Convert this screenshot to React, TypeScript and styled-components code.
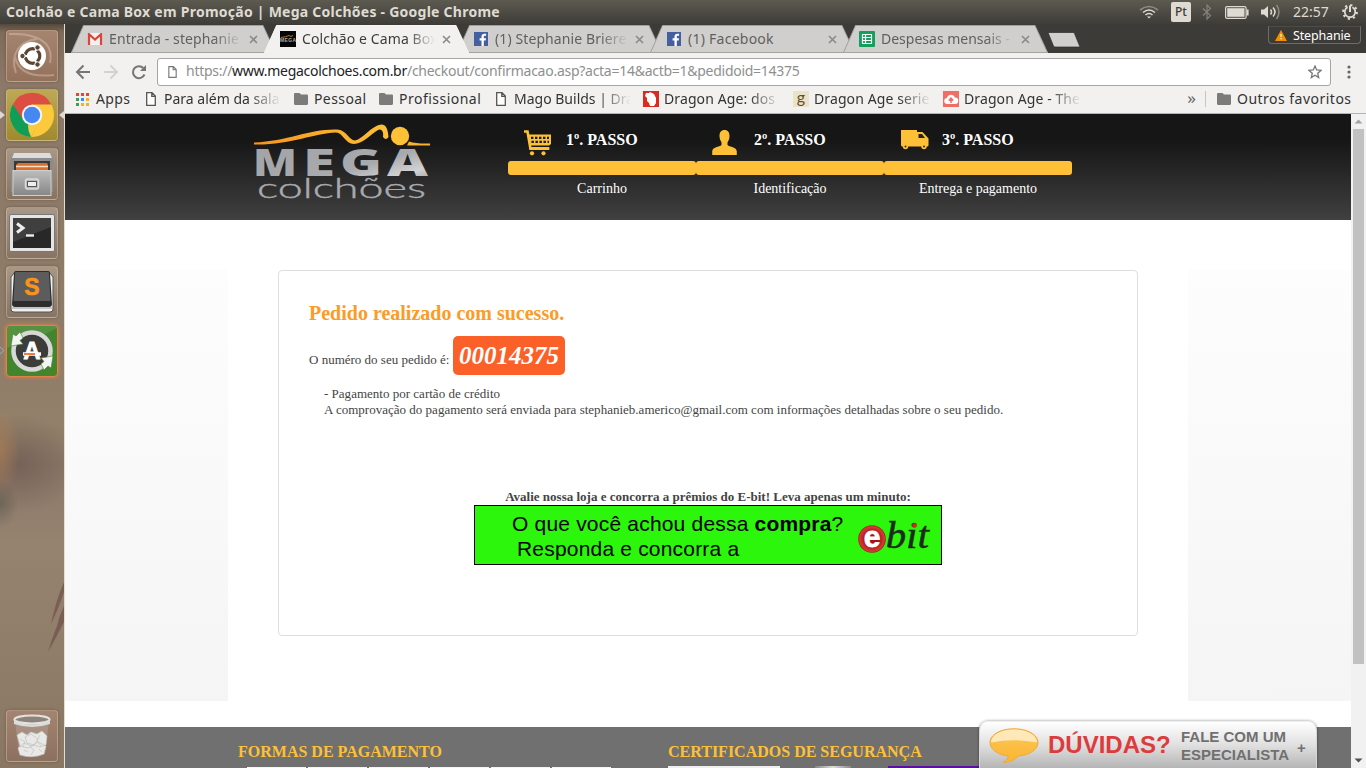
import React from "react";
import styled, { createGlobalStyle, css } from "styled-components";

const ui = `"Noto Sans", "Open Sans", sans-serif`;
const serif = `"Liberation Serif", "Times New Roman", serif`;
const sans = `"Liberation Sans", Arial, sans-serif`;

const GlobalStyle = createGlobalStyle`
  * { box-sizing: border-box; }
  body { margin: 0; overflow: hidden; font-family: ${ui}; }
  svg { display: block; flex: none; }
`;

const Desktop = styled.div`
  width: 1366px;
  height: 768px;
  display: grid;
  grid-template: 24px 744px / 65px 1301px;
  overflow: hidden;
`;

/* ---------- system bar ---------- */
const SystemBar = styled.header`
  grid-column: 1 / 3;
  display: flex;
  align-items: center;
  justify-content: space-between;
  padding: 0 8px 0 6px;
  background: linear-gradient(#5d5b50, #4d4b44 50%, #3e3d38);
  color: #dfdbd2;
`;
const WindowTitle = styled.div`
  font: bold 14px/24px ${ui};
  letter-spacing: 0.25px;
  white-space: nowrap;
`;
const Indicators = styled.div`
  display: flex;
  align-items: center;
`;
const Indicator = styled.div<{ $gap: number }>`
  margin-left: ${(p) => p.$gap}px;
`;
const Keyboard = styled.div`
  width: 20px;
  height: 20px;
  margin-left: 12px;
  border-radius: 2px;
  background: #dfdbd2;
  color: #3c3b37;
  font: 500 12px/20px ${ui};
  text-align: center;
`;
const Clock = styled.div`
  width: 37px;
  margin: 0 12px 0 12px;
  font: 14px/24px ${ui};
  white-space: nowrap;
`;

/* ---------- launcher ---------- */
const Launcher = styled.nav`
  position: relative;
  display: flex;
  flex-direction: column;
  gap: 7px;
  padding: 6px 6px;
  border-right: 1px solid #e6ddcf;
  background:
    radial-gradient(ellipse 20px 44px at 0 425px, rgba(172, 126, 82, 0.7), transparent),
    radial-gradient(ellipse 60px 50px at 18px 440px, rgba(96, 76, 70, 0.5), transparent),
    radial-gradient(ellipse 18px 24px at 0 480px, rgba(84, 84, 76, 0.55), transparent),
    linear-gradient(#55473a 0, #7e6b5a 8px, #8d7967 60px, #8e7b68 300px, #92806a 400px, #8c7868 440px, #958370 520px, #8a7763 100%);
`;
const Tile = styled.div<{ $bg?: string; $glow?: boolean }>`
  width: 52px;
  height: 52px;
  flex: none;
  display: grid;
  place-items: center;
  border: 1px solid rgba(225, 205, 185, 0.4);
  border-radius: 4px;
  background: ${(p) => p.$bg || "linear-gradient(rgba(255,245,235,.24), rgba(255,240,225,.1) 50%, rgba(60,40,30,.08))"};
  box-shadow: 0 0 3px rgba(50, 35, 25, 0.35);
  ${(p) => p.$glow && css`
    border-color: #e0824c;
    box-shadow: 0 0 3px 1px #d87b48;
  `}
`;
const Spring = styled.div`
  flex: 1;
`;
const Marks = styled.svg`
  position: absolute;
  left: 0;
  top: 0;
`;

/* ---------- browser chrome ---------- */
const Browser = styled.div`
  display: grid;
  grid-template-rows: 29px 61px 654px;
  min-width: 0;
`;
const TabStrip = styled.div`
  display: flex;
  align-items: flex-start;
  padding: 1px 5px 0 6px;
  background: #3c3b37;
`;
const TabBox = styled.div<{ $active?: boolean }>`
  position: relative;
  z-index: ${(p) => (p.$active ? 2 : 1)};
  display: flex;
  align-items: center;
  flex: none;
  width: 205px;
  height: 28px;
  margin-right: -12px;
  padding-left: 16px;
  color: ${(p) => (p.$active ? "#3c3c3c" : "#5f5f5f")};
`;
const TabShape = styled.svg`
  position: absolute;
  inset: 0;
  z-index: -1;
`;
const TabIcon = styled.div`
  width: 16px;
  height: 16px;
  margin-right: 6px;
  display: grid;
  place-items: center;
`;
const TabTitle = styled.div<{ $fade?: boolean; $ls?: number }>`
  width: 133px;
  overflow: hidden;
  white-space: nowrap;
  font: 14px/20px ${ui};
  letter-spacing: ${(p) => p.$ls ?? 0}px;
  ${(p) => p.$fade && css`mask-image: linear-gradient(90deg, #000 105px, transparent 133px);`}
`;
const TabClose = styled.div`
  margin-left: 7px;
`;
const NewTab = styled.svg`
  margin: 7px 0 0 11px;
`;
const Profile = styled.div`
  display: flex;
  align-items: center;
  gap: 6px;
  width: 93px;
  height: 18px;
  margin: 1px 0 0 auto;
  padding-left: 6px;
  border: 1px solid #6e6d69;
  border-top-color: #4d4c48;
  border-radius: 0 0 4px 4px;
  color: #fff;
  font: 12.5px/17px ${ui};
  letter-spacing: -0.15px;
`;
const Controls = styled.div`
  display: grid;
  grid-template-rows: 33px 27px;
  background: #f2f1f0;
  border-bottom: 1px solid #b6b4b2;
`;
const Toolbar = styled.div`
  display: flex;
  align-items: center;
  padding: 4px 0 0 10px;
`;
const NavIcon = styled.div`
  width: 28px;
`;
const Omnibox = styled.div`
  display: flex;
  align-items: center;
  width: 1174px;
  height: 28px;
  margin-left: -2px;
  padding: 0 8px 0 10px;
  background: #fff;
  border: 1px solid #a6a5a4;
  border-radius: 3px;
`;
const Url = styled.div`
  flex: 1;
  margin-left: 9px;
  padding-bottom: 2px;
  color: #8f8f8f;
  font: 14px/22px ${ui};
  letter-spacing: -0.27px;
  white-space: nowrap;
  b { font-weight: 400; color: #222; }
`;
const MenuDots = styled.svg`
  margin-left: 16px;
`;
const Bookmarks = styled.div`
  display: flex;
  align-items: center;
  padding: 0 0 1px 11px;
`;
const Bookmark = styled.div<{ $w: number; $icon?: number }>`
  display: flex;
  align-items: center;
  flex: none;
  width: ${(p) => p.$w}px;
  > svg { margin-right: ${(p) => p.$icon ?? 6}px; }
`;
const BookmarkText = styled.div<{ $fade?: boolean; $ls?: number }>`
  padding-bottom: 1px;
  color: #333;
  font: 14px/22px ${ui};
  letter-spacing: ${(p) => p.$ls ?? 0}px;
  white-space: nowrap;
  ${(p) => p.$fade && css`
    width: 117px;
    overflow: hidden;
    mask-image: linear-gradient(90deg, #000 85px, transparent 117px);
  `}
`;
const More = styled.div`
  margin-left: auto;
  padding-bottom: 2px;
  color: #666;
  font: 17px/20px ${ui};
`;
const Divider = styled.div`
  width: 1px;
  height: 16px;
  margin: 0 11px 0 9px;
  background: #c6c5c4;
`;

/* ---------- page ---------- */
const Viewport = styled.div`
  position: relative;
  display: grid;
  grid-template-columns: 1286px 15px;
  overflow: hidden;
  background: #fff;
`;
const Page = styled.div`
  display: grid;
  grid-template-rows: 106px 507px 41px;
  font-family: ${serif};
`;
const SiteHeader = styled.div`
  display: flex;
  padding-left: 188px;
  background: linear-gradient(#161616 25%, #404040);
`;
const Logo = styled.svg`
  width: 180px;
  height: 90px;
  margin: 6px 75px 0 0;
`;
const Step = styled.div`
  width: 188px;
  padding-top: 16px;
  color: #fff;
`;
const StepHead = styled.div<{ $left: number }>`
  display: flex;
  height: 31px;
  padding-left: ${(p) => p.$left}px;
  font: bold 16px/20px ${serif};
  > svg { margin-right: ${(p) => 30 - p.$left}px; }
`;
const StepBar = styled.div`
  height: 14px;
  border-radius: 3px;
  background: #fdc037;
`;
const StepName = styled.div`
  margin-top: 6px;
  font: 14px/16px ${serif};
  text-align: center;
`;
const Body = styled.main`
  display: grid;
  grid-template-columns: 163px 860px 163px;
  justify-content: space-between;
  height: 481px;
`;
const Side = styled.div`
  margin-top: 50px;
  background: linear-gradient(#fdfdfd, #f5f5f5);
`;
const Card = styled.section`
  height: 366px;
  margin-top: 50px;
  padding: 29px 30px;
  border: 1px solid #dedede;
  border-radius: 4px;
  color: #444;
  font: 13px/16px ${serif};
`;
const Title = styled.h1`
  margin: 0;
  color: #fd9b27;
  font: bold 20px/26px ${serif};
`;
const OrderLine = styled.div`
  display: flex;
  align-items: baseline;
  gap: 4px;
  margin-top: 10px;
`;
const OrderNumber = styled.em`
  padding: 5px 6.500px 5px 5.500px;
  border-radius: 5px;
  background: #fc6029;
  color: #fff;
  font: italic bold 25px/29px ${serif};
`;
const Details = styled.p`
  margin: 11px 0 0 15px;
  letter-spacing: 0.01px;
  white-space: nowrap;
`;
const Survey = styled.div`
  display: flex;
  flex-direction: column;
  align-items: center;
  margin-top: 71px;
  font-weight: bold;
`;
const Banner = styled.div`
  display: flex;
  width: 468px;
  height: 60px;
  padding: 5px 0 0 37px;
  border: 1px solid #000;
  background: #2bf60c;
  color: #000;
  font: 21px/25px ${sans};
  letter-spacing: 0.19px;
`;
const Question = styled.div`
  width: 345px;
  white-space: nowrap;
`;
const SecondLine = styled.div`
  padding-left: 5px;
`;
const Footer = styled.footer`
  display: grid;
  grid-template-columns: 430px 1fr;
  padding: 15px 0 0 173px;
  background: #707070;
  overflow: hidden;
`;
const FooterTitle = styled.h2`
  margin: 0;
  color: #fdc037;
  font: bold 16px/20px ${serif};
`;
const PaymentRow = styled.div`
  display: flex;
  gap: 2px;
  margin: 5px 0 0 9px;
`;
const Payment = styled.div`
  width: 59px;
  height: 30px;
  background: #f4f4f4;
`;
const SealRow = styled.div`
  display: flex;
  margin-top: 4px;
`;
const Seal = styled.div<{ $w: number; $left: number; $color: string }>`
  width: ${(p) => p.$w}px;
  height: 30px;
  margin-left: ${(p) => p.$left}px;
  background: ${(p) => p.$color};
`;
const Chat = styled.aside`
  position: absolute;
  right: 49px;
  bottom: 0;
  display: flex;
  width: 338px;
  height: 47px;
  padding: 6px 0 0 9px;
  border: 1px solid #d8d8d8;
  border-top-color: #eee;
  border-bottom: 0;
  border-radius: 9px 9px 0 0;
  background: linear-gradient(#fff, #e0e0e0 50%, #b5b5b5);
  box-shadow: 0 0 3px rgba(0, 0, 0, 0.45);
  font-family: ${sans};
  font-weight: bold;
`;
const Doubts = styled.div`
  width: 133px;
  margin-left: 9px;
  color: #dc3c3e;
  font-size: 24px;
  line-height: 34px;
`;
const Talk = styled.div`
  width: 116px;
  color: #707070;
  font-size: 15px;
  line-height: 18px;
  white-space: nowrap;
`;
const Plus = styled.div`
  color: #707070;
  font-size: 15px;
  line-height: 40px;
`;
const ScrollBar = styled.div`
  display: flex;
  flex-direction: column;
  align-items: center;
  justify-content: space-between;
  background: #f1f1f1;
`;
const Thumb = styled.div`
  width: 11px;
  height: 535px;
  margin-bottom: 89px;
  background: #c1c1c1;
`;

/* ---------- drawings ---------- */
const FolderIcon = () => (
  <svg width="14" height="12" viewBox="0 0 14 12">
    <path d="M1.2 0H5.5L7 1.600h5.800c.7 0 1.200.5 1.200 1.200v8c0 .7-.5 1.200-1.200 1.200H1.200C.5 12 0 11.500 0 10.800V1.200C0 .5.500 0 1.200 0z" fill="#7b7b7b" />
  </svg>
);
const PageIcon = ({ w = 10, h = 14, color = "#555" }) => (
  <svg width={w} height={h} viewBox="0 0 10 14">
    <path d="M.7.7H6l3.300 3.400v9.200H.7zM5.800.7v3.600h3.500" fill="#fff" stroke={color} strokeWidth="1.300" />
  </svg>
);
const FacebookIcon = () => (
  <svg width="14" height="14" viewBox="0 0 14 14">
    <rect width="14" height="14" fill="#4460a0" />
    <path d="M7.500 14V8.400H5.600V6.300h1.900V4.700c0-2 1.100-3 2.900-3h1.700v2.100h-1.200c-.9 0-1.100.4-1.100 1.100v1.400h2.200l-.3 2.100H9.800V14z" fill="#fff" />
  </svg>
);
const GmailIcon = () => (
  <svg width="16" height="12" viewBox="0 0 16 12">
    <rect x="1" y="0" width="14" height="12" rx="1" fill="#f3f1f0" />
    <path d="M2 12V1.200L8 6.600l6-5.400V12" fill="none" stroke="#d9453a" strokeWidth="2.200" />
  </svg>
);
const MegaIcon = () => (
  <svg width="16" height="16" viewBox="0 0 16 16">
    <rect width="16" height="16" fill="#050505" />
    <path d="M1 6.500Q6 6 9 4.500l2 1 2-1" fill="none" stroke="#b87a1c" />
    <text x="0" y="10.500" fontSize="5" fontWeight="bold" fontFamily="Liberation Sans" fill="#aaa" textLength="16">MEGA</text>
  </svg>
);
const SheetIcon = () => (
  <svg width="16" height="16" viewBox="0 0 16 16">
    <rect width="16" height="16" rx="1" fill="#12a05c" />
    <path d="M3.500 3.500h9v9h-9zM3.500 6.500h9M3.500 9.500h9M6.500 3.500v9" fill="none" stroke="#fff" strokeWidth="1.200" />
  </svg>
);
const CloseIcon = () => (
  <svg width="9" height="9" viewBox="0 0 9 9">
    <path d="M1 1l7 7M8 1L1 8" stroke="#8a8a8a" strokeWidth="1.600" />
  </svg>
);

type TabProps = { icon: React.ReactNode; title: string; active?: boolean; fade?: boolean; ls?: number };
const Tab = ({ icon, title, active, fade = true, ls }: TabProps) => (
  <TabBox $active={active}>
    <TabShape width="205" height="28" viewBox="0 0 205 28">
      <path d="M0 28L12.500 0H192L205 28z" fill={active ? "#f2f1f0" : "#d1cfcd"} />
      <path d="M.5 27.500L12.500.5H192L204.500 27.500" fill="none" stroke={active ? "#f8f8f7" : "#96948f"} strokeWidth=".8" />
      {!active && <path d="M0 27.500h205" stroke="#a5a3a0" />}
    </TabShape>
    <TabIcon>{icon}</TabIcon>
    <TabTitle $fade={fade} $ls={ls}>{title}</TabTitle>
    <TabClose><CloseIcon /></TabClose>
  </TabBox>
);

const UbuntuIcon = () => (
  <svg width="50" height="50" viewBox="0 0 50 50">
    <g fill="none" stroke="#e4d0c0" strokeWidth="2" opacity=".4">
      <path d="M2 3C24 2 48 8 43 32M9 42C2 22 14 10 30 8M47 44C30 46 12 44 8 26" />
    </g>
    <circle cx="25" cy="25" r="14" fill="#fff" />
    <circle cx="25.500" cy="25" r="7.300" fill="none" stroke="#5b4533" strokeWidth="3.200" />
    <path d="M25.500 25L12 25M25.500 25l6.500-11.500M25.500 25L32 36.500" stroke="#fff" strokeWidth="2" />
    <circle cx="25.500" cy="25" r="5" fill="#fff" />
    <g fill="#5b4533" stroke="#fff">
      <circle cx="15.500" cy="25" r="2.700" /><circle cx="30.500" cy="16.500" r="2.700" /><circle cx="30.500" cy="33.500" r="2.700" />
    </g>
  </svg>
);
const ChromeIcon = () => (
  <svg width="46" height="46" viewBox="0 0 46 46">
    <circle cx="23" cy="23" r="22" fill="#fdc93c" />
    <path d="M3.900 12A22 22 0 0022 45l9-17L16 27z" fill="#109d58" />
    <path d="M23 12.500h19.500A22 22 0 0022 45l10-17z" fill="#fdc93c" />
    <path d="M3.900 12A22 22 0 0142.500 12.500H23L13 26z" fill="#dc4e41" />
    <circle cx="23" cy="23" r="10.200" fill="#f4f4f4" /><circle cx="23" cy="23" r="8.200" fill="#4688f1" />
  </svg>
);
const FilesIcon = () => (
  <svg width="44" height="46" viewBox="0 0 44 46">
    <defs><linearGradient id="cab" x2="0" y2="1"><stop stopColor="#bdbdbd" /><stop offset="1" stopColor="#868686" /></linearGradient></defs>
    <path d="M3 3h38l2 6v32H1V9z" fill="#8c8c8c" />
    <path d="M4 2h36l2 5H2z" fill="#dcdcdc" />
    <rect x="4" y="10" width="36" height="10" fill="#3b3937" />
    <path d="M6 20v-6l2-2h29l1 2v6z" fill="#d86f2e" /><path d="M6 15.500h32" stroke="#ffe0be" strokeWidth="1.500" />
    <rect x="3" y="19.500" width="38" height="25" fill="url(#cab)" stroke="#cfcfcf" />
    <rect x="15.500" y="28" width="13" height="10" rx="2" fill="#b9b9b9" stroke="#dadada" strokeWidth="1.500" />
    <rect x="17.500" y="30.500" width="9" height="5" fill="#eee" stroke="#555" />
  </svg>
);
const TerminalIcon = () => (
  <svg width="46" height="38" viewBox="0 0 46 38">
    <rect x=".5" y=".5" width="45" height="37" rx="1.500" fill="#e5e5e5" stroke="#777" />
    <rect x="4" y="4" width="38" height="30" fill="#282828" />
    <path d="M4 4h38v9L4 28z" fill="#3f3f3f" />
    <path d="M8 9.500l6 4.500-6 4.500" fill="none" stroke="#eee" strokeWidth="3" /><path d="M17 21.500h8" stroke="#eee" strokeWidth="2.400" />
  </svg>
);
const SublimeIcon = () => (
  <svg width="44" height="42" viewBox="0 0 44 42">
    <path d="M1 6l3-4h36l3 4v32q0 3-3 3H4q-3 0-3-3z" fill="#f0f0f0" stroke="#555" />
    <path d="M2 37h40" stroke="#999" />
    <path d="M4 2q0-2 2-2h32q2 0 2 2l2 31q0 3-3 3H5q-3 0-3-3z" fill="#2d2d2d" />
    <path d="M5 2q0-1 1-1h32q1 0 1 1l1.500 28H3.500z" fill="#5c5c5c" />
    <text x="22" y="23.500" textAnchor="middle" fontFamily="Liberation Sans" fontWeight="bold" fontSize="23" fill="#f79420" stroke="#f79420" strokeWidth=".6">S</text>
  </svg>
);
const UpdaterIcon = () => (
  <svg width="50" height="50" viewBox="0 0 50 50">
    <path d="M0 22Q24 16 50 2V0H0z" fill="#6fa35c" opacity=".4" />
    <circle cx="25" cy="25" r="18.500" fill="#3c3c3a" stroke="#d8d8d6" strokeWidth="4.500" />
    <path d="M4 20L6 8l3 2 4-4 3 6-3 2.500 3 3.500zM46 30l-2 12-3-2-4 4-3-6 3-2.500-3-3.500z" fill="#f4f4f4" stroke="#43852f" strokeWidth=".6" />
    <text x="25" y="33" textAnchor="middle" fontFamily="Liberation Sans" fontWeight="bold" fontSize="24" fill="#fff" stroke="#fff" strokeWidth=".8">A</text>
    <path d="M16 28h18" stroke="#fff" strokeWidth="3.500" /><path d="M17 28h11" stroke="#f06d2b" strokeWidth="1.800" />
  </svg>
);
const TrashIcon = () => (
  <svg width="40" height="46" viewBox="0 0 40 46">
    <path d="M3 8l4 33q13 6 26 0l4-33z" fill="#c0b8b0" opacity=".35" />
    <g fill="#e8e8e7" stroke="#c2c2c0" strokeWidth=".7">
      <path d="M5 22l5-3 5 3 4-3 6 2 5-3 5 5-1 9-6 2-6-2-6 3-8-2zM6 35l6-5 8 3 6-4 8 4-2 8q-12 5-24 1zM13 24l6-3 7 5-4 6-7-2z" />
      <path d="M8 26l5 3-2 5M28 22l-3 6 4 5M18 34l4 3-3 5M12 37l4 2M27 36l3 3" fill="none" />
    </g>
    <ellipse cx="20" cy="6.500" rx="17.500" ry="4" fill="#8d837a" stroke="#e2e2e0" strokeWidth="2.200" />
    <path d="M2 8q18 7 36 0v3q-18 6-36 0z" fill="#dbdcda" />
  </svg>
);

const SiteLogo = () => (
  <Logo viewBox="0 0 180 90">
    <defs>
      <linearGradient id="metal" x2="1" y2="1"><stop stopColor="#a1a2a5" /><stop offset=".6" stopColor="#a9aaad" /><stop offset=".8" stopColor="#d2d2d4" /><stop offset="1" stopColor="#8c8d90" /></linearGradient>
      <linearGradient id="gold"><stop stopColor="#f7941e" /><stop offset="1" stopColor="#fdc037" /></linearGradient>
    </defs>
    <path d="M1 22.500C35 21 58 8.500 84 9.500C94 10 96 20.500 102 20.500C110 19 118 6 128 4.500C134 4.500 135 11 135.500 17Q133 21 130 17C131 11 128 8 125 10C117 15 109 24 101 24C92 24 90 12.500 83 12.500C60 13.500 35 25.500 1 24.500z" fill="url(#gold)" />
    <circle cx="147" cy="16" r="9.200" fill="#fdc037" />
    <path d="M156 21.500Q164 24 177 23.500v2h-23z" fill="#fbb030" />
    <text x="0" y="56" fontFamily="Open Sans, sans-serif" fontWeight="800" fontSize="36.500" fill="url(#metal)">
      <tspan x="0" textLength="44" lengthAdjust="spacingAndGlyphs">M</tspan>
      <tspan x="50" textLength="32" lengthAdjust="spacingAndGlyphs">E</tspan>
      <tspan x="87" textLength="42" lengthAdjust="spacingAndGlyphs">G</tspan>
      <tspan x="134" textLength="41" lengthAdjust="spacingAndGlyphs">A</tspan>
    </text>
    <text x="4" y="77.500" fontFamily="Lato, sans-serif" fontWeight="300" fontSize="26.500" fill="#a9aaad" stroke="#a9aaad" strokeWidth=".35" textLength="169" lengthAdjust="spacingAndGlyphs">colchões</text>
  </Logo>
);
const CartIcon = () => (
  <svg width="28" height="26" viewBox="0 0 28 26">
    <path d="M0 1.500h3.500L6.500 19" fill="none" stroke="#fdc037" strokeWidth="2.600" />
    <rect x="5" y="17" width="20.500" height="3" rx="1" fill="#fdc037" />
    <path d="M4.500 4.500H27v9.500L25 15.500H7z" fill="#fdc037" />
    <path d="M7 7.800H25M7.500 11.800H25" stroke="#1b1b1b" strokeWidth="2.200" strokeDasharray="2.400 1.600" />
    <circle cx="8" cy="23.300" r="2.100" fill="#fdc037" /><circle cx="19.500" cy="23.300" r="2.100" fill="#fdc037" />
  </svg>
);
const PersonIcon = () => (
  <svg width="28" height="26" viewBox="0 0 28 26">
    <path d="M12.500 0c3.500 0 5 2.500 5 6 0 3-1 4.500-2 6.500v2.500c2 2 9.300 2 9.300 6.500V25H.2v-3.500C.2 17 7.500 17 9.500 15v-2.500c-1-2-2-3.500-2-6.500 0-3.500 1.500-6 5-6z" fill="#fdc037" />
  </svg>
);
const TruckIcon = () => (
  <svg width="28" height="20" viewBox="0 0 28 20">
    <path d="M0 0h16v2h5.500l6 6.500V15q0 1.500-1.500 1.500H1.500Q0 16.500 0 15z" fill="#fdc037" />
    <path d="M17.500 4h3.500l3 4h-6.500z" fill="#242424" />
    <g fill="#fdc037"><circle cx="4.500" cy="16.500" r="2.700" /><circle cx="23" cy="16.500" r="2.700" /></g>
    <g fill="#222"><circle cx="4.500" cy="16.500" r=".9" /><circle cx="23" cy="16.500" r=".9" /></g>
  </svg>
);
const EbitLogo = () => (
  <svg width="80" height="50" viewBox="0 0 80 50">
    <defs><radialGradient id="ball"><stop offset=".5" stopColor="#a81216" /><stop offset=".9" stopColor="#d63a36" /><stop offset="1" stopColor="#a3171a" /></radialGradient></defs>
    <circle cx="15" cy="28" r="13.800" fill="url(#ball)" />
    <text x="15" y="35.500" textAnchor="middle" fontFamily="Liberation Sans" fontWeight="bold" fontSize="30" letterSpacing="0" fill="#fff" stroke="#fff" strokeWidth=".8">e</text>
    <text x="29" y="36.500" fontFamily="Liberation Serif" fontStyle="italic" fontSize="38" fill="#1d2b1c" stroke="#1d2b1c" strokeWidth=".6" textLength="43" lengthAdjust="spacingAndGlyphs">bit</text>
    <circle cx="57.500" cy="14.500" r="2.300" fill="#d02a20" />
  </svg>
);
const BubbleIcon = () => (
  <svg width="50" height="36" viewBox="0 0 50 36">
    <defs><linearGradient id="bub" x2="0" y2="1"><stop stopColor="#fbc860" /><stop offset="1" stopColor="#fcb52c" /></linearGradient></defs>
    <path d="M25 .8C39 .8 49 7 49 14.500C49 21.500 41 27 29 28C26 32 20 34.500 14 34.500C18 32 19.500 30 19 28C8 26.500 1 21 1 14.500C1 7 11 .8 25 .8z" fill="url(#bub)" stroke="#f0a93c" />
    <path d="M25 1.500C38 1.500 48 7 48 14.500Q25 10 2 14.500C2 7 12 1.500 25 1.500z" fill="#fff1cf" opacity=".8" />
  </svg>
);

export default function App() {
  return (
    <>
      <GlobalStyle />
      <Desktop>
        <SystemBar>
          <WindowTitle>Colchão e Cama Box em Promoção | Mega Colchões - Google Chrome</WindowTitle>
          <Indicators>
            <svg width="20" height="14" viewBox="0 0 20 14" fill="none" strokeWidth="1.600">
              <path d="M1 5Q10-2 19 5" stroke="#8d8a82" /><path d="M4 7.500Q10 2.500 16 7.500M6.500 10Q10 7 13.500 10" stroke="#dfdbd2" />
              <path d="M8 11.500h4l-2 2z" fill="#dfdbd2" />
            </svg>
            <Keyboard>Pt</Keyboard>
            <Indicator $gap={11}>
              <svg width="10" height="16" viewBox="0 0 10 16"><path d="M1 4.500l7.500 7L5 15V1l3.500 3.500-7.500 7" fill="none" stroke="#85827a" strokeWidth="1.200" /></svg>
            </Indicator>
            <Indicator $gap={13}>
              <svg width="24" height="13" viewBox="0 0 24 13"><rect x=".6" y=".6" width="20.500" height="11.800" rx="1.500" fill="none" stroke="#dfdbd2" strokeWidth="1.200" /><rect x="2.200" y="2.200" width="17.300" height="8.600" fill="#dfdbd2" /><path d="M22.600 3.500v6" stroke="#dfdbd2" strokeWidth="2" /></svg>
            </Indicator>
            <Indicator $gap={12}>
              <svg width="20" height="16" viewBox="0 0 20 16" fill="none" strokeWidth="1.500"><path d="M0 5.500h3l4-3.500v12l-4-3.500H0z" fill="#dfdbd2" /><path d="M9.500 5.500q2 2.500 0 5M12 3.500q4 4.500 0 9" stroke="#dfdbd2" /><path d="M15.500 1q5 7 0 14" stroke="#8d8a82" /></svg>
            </Indicator>
            <Clock>22:57</Clock>
            <svg width="16" height="16" viewBox="0 0 16 16" fill="none" stroke="#dfdbd2">
              <circle cx="8" cy="8" r="6.900" strokeWidth="2" strokeDasharray="2.200 3.220" /><path d="M5.600 3.200a5.300 5.300 0 104.800 0" strokeWidth="1.800" /><path d="M8 1.500v6.500" strokeWidth="2" />
            </svg>
          </Indicators>
        </SystemBar>

        <Launcher>
          <Tile $bg="linear-gradient(#a58570, #94715b)"><UbuntuIcon /></Tile>
          <Tile $bg="linear-gradient(#bda955, #a08a2e)"><ChromeIcon /></Tile>
          <Tile><FilesIcon /></Tile>
          <Tile><TerminalIcon /></Tile>
          <Tile><SublimeIcon /></Tile>
          <Tile $bg="#43852f" $glow><UpdaterIcon /></Tile>
          <Spring />
          <Tile $bg="linear-gradient(#a3846f, #8c7060)"><TrashIcon /></Tile>
          <Marks width="65" height="744" viewBox="0 0 65 744">
            <path d="M0 87l5 4-5 4zM64 87l-5 4 5 4z" fill="#ddd9d5" />
            <path d="M0 323l4 3.500-4 3.500" fill="none" stroke="#82b8cf" />
            <path d="M64 558q-8 18-13 42 8-16 13-32zM64 582q-5 10-7 20-5 12-9 26 8-14 16-30z" fill="#6d4c46" opacity=".65" />
          </Marks>
        </Launcher>

        <Browser>
          <TabStrip>
            <Tab icon={<GmailIcon />} title="Entrada - stephanie" ls={0.1} />
            <Tab icon={<MegaIcon />} title="Colchão e Cama Box" active ls={0.1} />
            <Tab icon={<FacebookIcon />} title="(1) Stephanie Briere" ls={0.1} />
            <Tab icon={<FacebookIcon />} title="(1) Facebook" fade={false} ls={0.25} />
            <Tab icon={<SheetIcon />} title="Despesas mensais -" />
            <NewTab width="34" height="16" viewBox="0 0 34 16"><path d="M1 .5h25q1 0 1.500 1L33 15H8q-1 0-1.500-1z" fill="#d1cfcd" stroke="#2d2c29" strokeWidth=".7" /></NewTab>
            <Profile>
              <svg width="12" height="11" viewBox="0 0 12 11"><path d="M6 0l6 11H0z" fill="#f29100" /><path d="M6 4v3M6 8v1.300" stroke="#fff" /></svg>
              Stephanie
            </Profile>
          </TabStrip>
          <Controls>
            <Toolbar>
              <NavIcon><svg width="16" height="16" viewBox="0 0 16 16"><path d="M15 8H2.500M8.500 1.500L2 8l6.500 6.500" fill="none" stroke="#757575" strokeWidth="2" /></svg></NavIcon>
              <NavIcon><svg width="16" height="16" viewBox="0 0 16 16"><path d="M1 8h12.500M7.500 1.500L14 8l-6.500 6.500" fill="none" stroke="#d3d2d1" strokeWidth="2" /></svg></NavIcon>
              <NavIcon><svg width="16" height="16" viewBox="0 0 16 16"><path d="M13.500 10.500A6 6 0 1112.300 4" fill="none" stroke="#757575" strokeWidth="2" /><path d="M15 1v6H9z" fill="#757575" /></svg></NavIcon>
              <Omnibox>
                <PageIcon w={9} h={12} color="#777" />
                <Url>https://<b>www.megacolchoes.com.br</b>/checkout/confirmacao.asp?acta=14&amp;actb=1&amp;pedidoid=14375</Url>
                <svg width="14" height="14" viewBox="0 0 14 14"><path d="M7 1l1.700 4 4.300.4-3.300 2.900 1 4.300L7 10.300l-3.700 2.300 1-4.300L1 5.400 5.300 5z" fill="none" stroke="#777" strokeWidth="1.300" /></svg>
              </Omnibox>
              <MenuDots width="4" height="14" viewBox="0 0 4 14" fill="#666"><circle cx="2" cy="2" r="1.600" /><circle cx="2" cy="7" r="1.600" /><circle cx="2" cy="12" r="1.600" /></MenuDots>
            </Toolbar>
            <Bookmarks>
              <Bookmark $w={70} $icon={7}>
                <svg width="13" height="13" viewBox="0 0 13 13">
                  <path d="M0 0h3v3H0zM5 0h3v3H5zM10 0h3v3h-3z" fill="#e94334" /><path d="M0 5h3v3H0zM0 10h3v3H0z" fill="#35a152" />
                  <path d="M5 5h3v3H5z" fill="#4385f4" /><path d="M10 5h3v3h-3zM5 10h3v3H5zM10 10h3v3h-3z" fill="#f5b31a" />
                </svg>
                <BookmarkText $ls={0.4}>Apps</BookmarkText>
              </Bookmark>
              <Bookmark $w={148} $icon={8}><PageIcon /><BookmarkText $fade>Para além da sala</BookmarkText></Bookmark>
              <Bookmark $w={85}><FolderIcon /><BookmarkText $ls={0.4}>Pessoal</BookmarkText></Bookmark>
              <Bookmark $w={117}><FolderIcon /><BookmarkText $ls={0.48}>Profissional</BookmarkText></Bookmark>
              <Bookmark $w={147} $icon={8}><PageIcon /><BookmarkText $fade>Mago Builds | Dra</BookmarkText></Bookmark>
              <Bookmark $w={150} $icon={5}>
                <svg width="16" height="16" viewBox="0 0 16 16"><rect width="16" height="16" fill="#dc2a20" /><path d="M3 2l3 0 1-1 4 2 2 4 0 5-2 3H7L6 12 4 10 4 7 2 5z" fill="#fff" /></svg>
                <BookmarkText $fade $ls={0.1}>Dragon Age: dos</BookmarkText>
              </Bookmark>
              <Bookmark $w={150} $icon={5}>
                <svg width="16" height="16" viewBox="0 0 16 16"><rect width="16" height="16" fill="#e9e3c9" /><text x="8" y="11.500" textAnchor="middle" fontFamily="Lato" fontSize="16" fill="#6b4b25">g</text></svg>
                <BookmarkText $fade $ls={0.1}>Dragon Age serie</BookmarkText>
              </Bookmark>
              <Bookmark $w={150} $icon={5}>
                <svg width="16" height="16" viewBox="0 0 16 16"><rect width="16" height="16" fill="#f26d64" /><path d="M4.500 13a3 3 0 01-.5-6 4.200 4.200 0 018-.5 3.200 3.200 0 010 6.500z" fill="#fff" /><path d="M8 12V8M5.800 9.500L8 7.200l2.200 2.300" fill="none" stroke="#f26d64" strokeWidth="1.500" /></svg>
                <BookmarkText $fade $ls={0.1}>Dragon Age - The</BookmarkText>
              </Bookmark>
              <More>»</More>
              <Divider />
              <Bookmark $w={149}><FolderIcon /><BookmarkText $ls={0.48}>Outros favoritos</BookmarkText></Bookmark>
            </Bookmarks>
          </Controls>

          <Viewport>
            <Page>
              <SiteHeader>
                <SiteLogo />
                <Step><StepHead $left={16}><CartIcon />1º. PASSO</StepHead><StepBar /><StepName>Carrinho</StepName></Step>
                <Step><StepHead $left={16}><PersonIcon />2º. PASSO</StepHead><StepBar /><StepName>Identificação</StepName></Step>
                <Step><StepHead $left={17}><TruckIcon />3º. PASSO</StepHead><StepBar /><StepName>Entrega e pagamento</StepName></Step>
              </SiteHeader>
              <Body>
                <Side />
                <Card>
                  <Title>Pedido realizado com sucesso.</Title>
                  <OrderLine>O numéro do seu pedido é: <OrderNumber>00014375</OrderNumber></OrderLine>
                  <Details>
                    - Pagamento por cartão de crédito<br />
                    A comprovação do pagamento será enviada para stephanieb.americo@gmail.com com informações detalhadas sobre o seu pedido.
                  </Details>
                  <Survey>
                    Avalie nossa loja e concorra a prêmios do E-bit! Leva apenas um minuto:
                    <Banner>
                      <Question>
                        O que você achou dessa <b>compra</b>?
                        <SecondLine>Responda e concorra a</SecondLine>
                      </Question>
                      <EbitLogo />
                    </Banner>
                  </Survey>
                </Card>
                <Side />
              </Body>
              <Footer>
                <div>
                  <FooterTitle>FORMAS DE PAGAMENTO</FooterTitle>
                  <PaymentRow>{[0, 1, 2, 3, 4, 5].map((n) => <Payment key={n} />)}</PaymentRow>
                </div>
                <div>
                  <FooterTitle>CERTIFICADOS DE SEGURANÇA</FooterTitle>
                  <SealRow>
                    <Seal $w={112} $left={0} $color="#eeeeee" />
                    <Seal $w={36} $left={35} $color="linear-gradient(90deg, #888, #ddd, #888)" />
                    <Seal $w={92} $left={37} $color="#5a10a0" />
                  </SealRow>
                </div>
              </Footer>
            </Page>
            <ScrollBar>
              <svg width="15" height="15" viewBox="0 0 15 15"><path d="M3.500 9.500h8l-4-4z" fill="#a3a3a3" /></svg>
              <Thumb />
              <svg width="15" height="15" viewBox="0 0 15 15"><path d="M3.500 5.500h8l-4 4z" fill="#505050" /></svg>
            </ScrollBar>
            <Chat>
              <BubbleIcon />
              <Doubts>DÚVIDAS?</Doubts>
              <Talk>FALE COM UM<br />ESPECIALISTA</Talk>
              <Plus>+</Plus>
            </Chat>
          </Viewport>
        </Browser>
      </Desktop>
    </>
  );
}
